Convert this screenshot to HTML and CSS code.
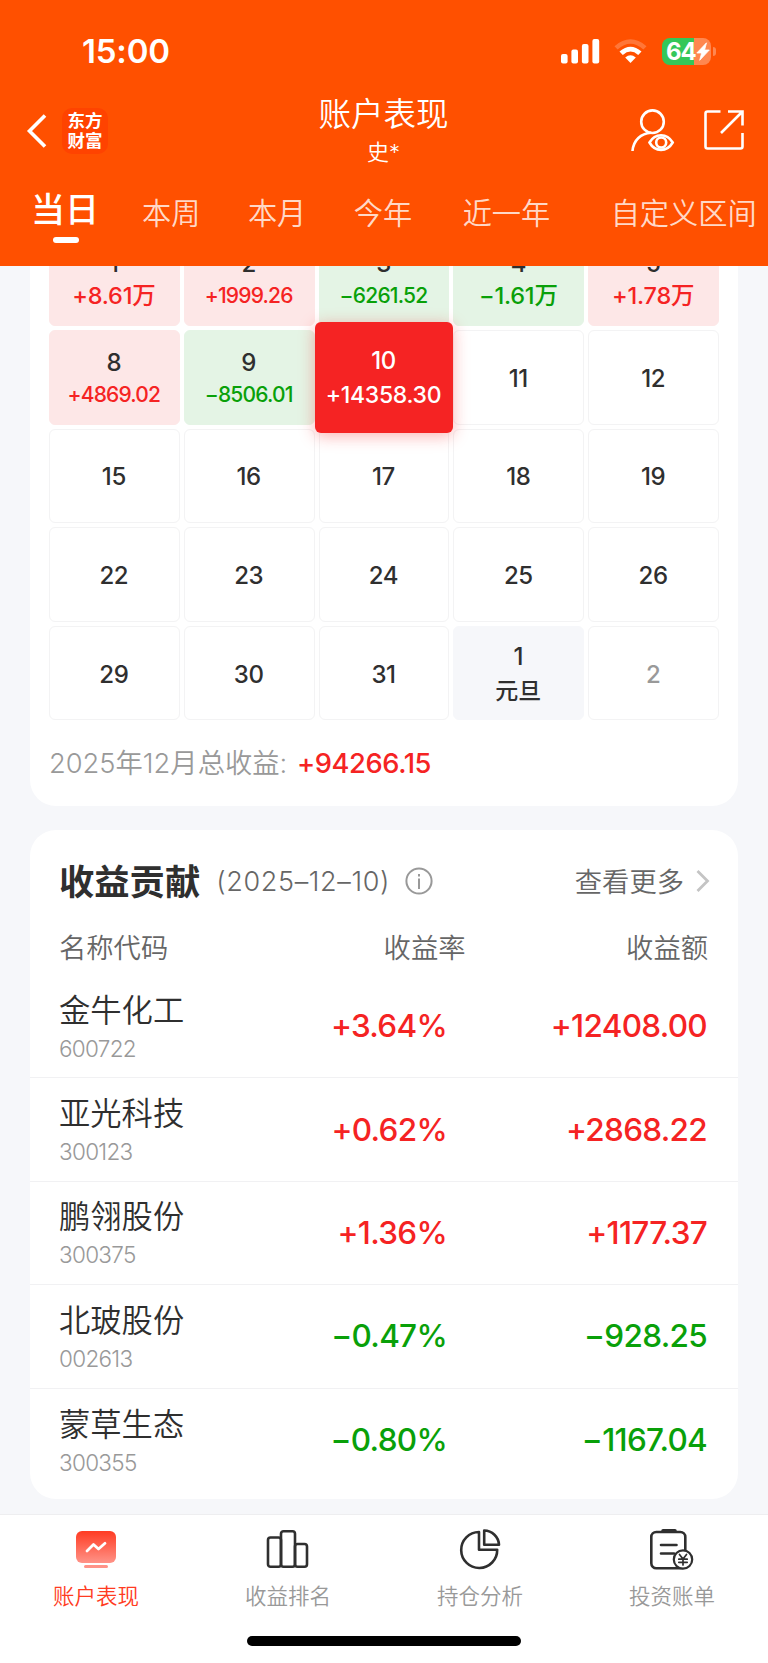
FILE: index.html
```
<!DOCTYPE html>
<html lang="zh-CN">
<head>
  <meta charset="UTF-8" />
  <meta name="viewport" content="width=device-width, initial-scale=1.0" />
  <title>账户表现</title>
  <link rel="stylesheet" href="styles.css">
</head>
<body>
  <div class="app">
    <header class="header">
      <div class="status">
        <span class="time">15:00</span>
        <div class="status-icons">
          <svg class="signal" width="39" height="25" viewBox="0 0 39 25" fill="#fff">
            <rect x="0" y="15" width="6.6" height="9.5" rx="2"/>
            <rect x="10.4" y="10.5" width="6.6" height="14" rx="2"/>
            <rect x="20.9" y="5" width="6.6" height="19.5" rx="2"/>
            <rect x="31.4" y="0" width="6.8" height="24.5" rx="2"/>
          </svg>
          <svg class="wifi" width="33" height="25" viewBox="0 0 33 25">
            <path d="M.5 7.2Q16.500 -6.500 32.500 7.200L29.400 10.400Q16.500 -.8 3.600 10.400Z" fill="#fff" opacity=".22"/>
            <path d="M5.500 12.500Q16.500 2.800 27.500 12.500L24.200 15.900Q16.500 9.300 8.800 15.900Z" fill="#fff"/>
            <path d="M11.200 18.400Q16.500 14 21.800 18.400L16.500 24Z" fill="#fff"/>
          </svg>
          <div class="battery">
            <span class="battery-text">64</span>
            <svg width="14" height="19" viewBox="0 0 14 19"><path d="M10.500 .8L.8 11H5.600L3.700 18.300 13.300 8H8.600Z" fill="#fff" stroke="#fff" stroke-width=".8" stroke-linejoin="round"/></svg>
          </div>
        </div>
      </div>

      <div class="nav">
        <div class="nav-left">
          <svg width="20" height="34" viewBox="0 0 20 34" fill="none" stroke="#fff" stroke-width="3.600"><path d="M18 1.500L2.500 17 18 32.500"/></svg>
          <div class="logo"><span>东方</span><span>财富</span></div>
        </div>
        <div class="nav-title">
          <h1>账户表现</h1>
          <p>史*</p>
        </div>
        <div class="nav-right">
          <svg width="43" height="43" viewBox="0 0 43 43" fill="none" stroke="#fff" stroke-width="2.600">
            <circle cx="21.500" cy="12.700" r="11.300"/>
            <path d="M1.500 42C2.500 31 10 24.500 20 23.800"/>
            <path d="M18.500 33.500C24 23.800 36 23.800 41.700 33.500 36 43.300 24 43.300 18.500 33.500Z"/>
            <circle cx="30.200" cy="33.500" r="5"/>
          </svg>
          <svg width="40" height="40" viewBox="0 0 40 40" fill="none" stroke="#fff" stroke-width="2.600">
            <path d="M16.500 1.500H3.500Q1.500 1.500 1.500 3.500V36.500Q1.500 38.500 3.500 38.500H36.500Q38.500 38.500 38.500 36.500V23"/>
            <path d="M24 1.500H38.500V15.500M38 2L17 23"/>
          </svg>
        </div>
      </div>

      <nav class="tabs">
        <a class="tab active">当日</a>
        <a class="tab">本周</a>
        <a class="tab">本月</a>
        <a class="tab">今年</a>
        <a class="tab">近一年</a>
        <a class="tab">自定义区间</a>
      </nav>
    </header>

    <main class="main">
      <section class="card calendar">
        <div class="grid">
          <div class="day up"><b>1</b><span class="wan">+8.61万</span></div>
          <div class="day up"><b>2</b><span>+1999.26</span></div>
          <div class="day down"><b>3</b><span>−6261.52</span></div>
          <div class="day down"><b>4</b><span class="wan">−1.61万</span></div>
          <div class="day up"><b>5</b><span class="wan">+1.78万</span></div>

          <div class="day up"><b>8</b><span>+4869.02</span></div>
          <div class="day down"><b>9</b><span>−8506.01</span></div>
          <div class="day selected"><b>10</b><span>+14358.30</span></div>
          <div class="day"><b>11</b></div>
          <div class="day"><b>12</b></div>

          <div class="day"><b>15</b></div>
          <div class="day"><b>16</b></div>
          <div class="day"><b>17</b></div>
          <div class="day"><b>18</b></div>
          <div class="day"><b>19</b></div>

          <div class="day"><b>22</b></div>
          <div class="day"><b>23</b></div>
          <div class="day"><b>24</b></div>
          <div class="day"><b>25</b></div>
          <div class="day"><b>26</b></div>

          <div class="day"><b>29</b></div>
          <div class="day"><b>30</b></div>
          <div class="day"><b>31</b></div>
          <div class="day holiday"><b>1</b><span>元旦</span></div>
          <div class="day next"><b>2</b></div>
        </div>
        <p class="total">2025年12月总收益: <strong>+94266.15</strong></p>
      </section>

      <section class="card contrib">
        <div class="contrib-head">
          <h2>收益贡献</h2>
          <span class="date">(2025–12–10)</span>
          <svg class="info" width="28" height="28" viewBox="0 0 28 28" fill="none" stroke="#999" stroke-width="2">
            <circle cx="14" cy="14" r="12.600"/>
            <path d="M14 11.500V22M14 7V9.400"/>
          </svg>
          <a class="more">查看更多
            <svg width="14" height="24" viewBox="0 0 14 24" fill="none" stroke="#c4c4c4" stroke-width="2.800"><path d="M1.500 2L11.500 12 1.500 22"/></svg>
          </a>
        </div>
        <div class="row row-head">
          <span>名称代码</span><span>收益率</span><span>收益额</span>
        </div>
        <div class="row">
          <div><p class="name">金牛化工</p><p class="code">600722</p></div>
          <span class="num red">+3.64%</span><span class="num red">+12408.00</span>
        </div>
        <div class="row">
          <div><p class="name">亚光科技</p><p class="code">300123</p></div>
          <span class="num red">+0.62%</span><span class="num red">+2868.22</span>
        </div>
        <div class="row">
          <div><p class="name">鹏翎股份</p><p class="code">300375</p></div>
          <span class="num red">+1.36%</span><span class="num red">+1177.37</span>
        </div>
        <div class="row">
          <div><p class="name">北玻股份</p><p class="code">002613</p></div>
          <span class="num green">−0.47%</span><span class="num green">−928.25</span>
        </div>
        <div class="row">
          <div><p class="name">蒙草生态</p><p class="code">300355</p></div>
          <span class="num green">−0.80%</span><span class="num green">−1167.04</span>
        </div>
      </section>
    </main>

    <footer class="footer">
      <div class="menu">
        <a class="menu-item active">
          <svg width="44" height="44" viewBox="0 0 44 44">
            <defs>
              <linearGradient id="screen" x1="0" y1="0" x2="0" y2="1">
                <stop offset="0" stop-color="#ff3b22"/>
                <stop offset="1" stop-color="#ff9388"/>
              </linearGradient>
            </defs>
            <rect x="2" y="4" width="40" height="32" rx="6" fill="url(#screen)"/>
            <rect x="10" y="38" width="24" height="3" rx="1.500" fill="#ff9388"/>
            <path d="M13 24L19.500 17.500 24.500 22 31 16.300" fill="none" stroke="#fff" stroke-width="2.800" stroke-linecap="round" stroke-linejoin="round"/>
          </svg>
          <span>账户表现</span>
        </a>
        <a class="menu-item">
          <svg width="44" height="44" viewBox="0 0 44 44" fill="none" stroke="#2f2f2f" stroke-width="2.600">
            <rect x="2" y="10.500" width="13" height="29.300" rx="2.500"/>
            <rect x="15" y="4.200" width="14" height="35.600" rx="2.500"/>
            <rect x="29" y="17" width="12" height="22.800" rx="2.500"/>
          </svg>
          <span>收益排名</span>
        </a>
        <a class="menu-item">
          <svg width="44" height="44" viewBox="0 0 44 44" fill="none" stroke="#2f2f2f" stroke-width="2.600" stroke-linejoin="round">
            <path d="M21 5V22.700H39.200A18 18 0 1 1 21 5Z"/>
            <path d="M26.200 3.500V17.800H41A15 15 0 0 0 26.200 3.500Z"/>
          </svg>
          <span>持仓分析</span>
        </a>
        <a class="menu-item">
          <svg width="44" height="44" viewBox="0 0 44 44" fill="none" stroke="#2f2f2f" stroke-width="2.600" stroke-linecap="round">
            <rect x="1.300" y="5" width="34" height="36.300" rx="5"/>
            <path d="M13 3.800H25" stroke-width="3.500"/>
            <path d="M11 18H26.500M11 26.500H24"/>
            <circle cx="33" cy="32.500" r="9.200" fill="#fff" stroke-width="2.200"/>
            <path d="M29.500 27.500L33 32 36.500 27.500M33 32V38M28.800 32.200H37.200M28.800 35.300H37.200" stroke-width="1.700"/>
          </svg>
          <span>投资账单</span>
        </a>
      </div>
      <div class="home-bar"></div>
    </footer>
  </div>
</body>
</html>
```
FILE: styles.css
```
* {
  box-sizing: border-box;
}
body {
  margin: 0;
  font-family: Inter, "Noto Sans CJK SC", sans-serif;
  color: #2f2f2f;
  background: #f6f7fa;
}
h1, h2, p {
  margin: 0;
  font-weight: 400;
}
svg {
  display: block;
  flex: none;
  overflow: visible;
}
.app {
  width: 768px;
  height: 1663px;
  display: flex;
  flex-direction: column;
  overflow: hidden;
}

/* header */
.header {
  height: 266px;
  flex: none;
  background: #ff5000;
  color: #fff;
  position: relative;
  z-index: 2;
}
.status {
  height: 98px;
  padding: 4px 52px 0 82px;
  display: flex;
  justify-content: space-between;
  align-items: center;
}
.time {
  font-size: 33px;
  font-weight: 600;
  line-height: 40px;
  letter-spacing: -0.2px;
}
.status-icons {
  display: flex;
  align-items: center;
}
.wifi {
  margin: 0 15px 0 14px;
}
.battery {
  width: 49px;
  height: 27px;
  margin-right: 5px;
  padding-left: 4px;
  border-radius: 8px;
  background: linear-gradient(to right, #34c759 0 32px, #ff8750 32px);
  display: flex;
  align-items: center;
  position: relative;
}
.battery::after {
  content: "";
  position: absolute;
  right: -5px;
  top: 9px;
  width: 3px;
  height: 9px;
  border-radius: 0 4px 4px 0;
  background: #ff8750;
}
.battery-text {
  font-size: 24px;
  font-weight: 700;
  line-height: 27px;
  letter-spacing: -1px;
}
.nav {
  height: 82px;
  padding: 0 24px 0 23px;
  display: grid;
  grid-template-columns: 1fr auto 1fr;
}
.nav-left {
  display: flex;
  align-items: center;
  gap: 15px;
  height: 65px;
  padding-left: 4px;
}
.logo {
  width: 46px;
  height: 46px;
  border-radius: 10px;
  background: #ff4300;
  display: flex;
  flex-direction: column;
  align-items: center;
  justify-content: center;
  font-size: 17.5px;
  font-weight: 700;
  line-height: 19.5px;
}
.nav-title {
  text-align: center;
}
.nav-title h1 {
  font-size: 32.5px;
  font-weight: 350;
  line-height: 34px;
}
.nav-title p {
  font-size: 22px;
  font-weight: 350;
  line-height: 40px;
}
.nav-right {
  display: flex;
  align-items: center;
  justify-content: flex-end;
  gap: 30px;
  height: 64px;
}
.tabs {
  display: flex;
  align-items: center;
  height: 66px;
  padding: 1px 0 0 31px;
  white-space: nowrap;
}
.tab {
  font-size: 29.2px;
  font-weight: 350;
  line-height: 66px;
  color: rgba(255, 255, 255, 0.8);
  margin-right: 47.5px;
}
.tab:nth-child(4) {
  margin-right: 50.5px;
}
.tab:nth-child(5) {
  margin-right: 60.5px;
}
.tab.active {
  font-size: 34px;
  font-weight: 500;
  line-height: 62px;
  color: #fff;
  margin: -8px 43px 0 0;
  position: relative;
}
.tab.active::after {
  content: "";
  position: absolute;
  left: 22px;
  bottom: -2px;
  width: 26px;
  height: 6px;
  border-radius: 3px;
  background: #fff;
}

/* scrolled content, first calendar row slides under the header */
.main {
  height: 1248px;
  flex: none;
  padding: 0 30px;
}
.card {
  background: #fff;
  border-radius: 26px;
}
.calendar {
  height: 574.5px;
  margin-top: -34.5px;
  padding: 0 19px;
}
.grid {
  display: grid;
  grid-template-columns: repeat(5, 1fr);
  grid-auto-rows: 94.5px;
  gap: 4.1px;
}
.day {
  border: 1px solid #f3f3f4;
  border-radius: 6px;
  display: flex;
  flex-direction: column;
  align-items: center;
  justify-content: center;
  line-height: 32px;
  padding: 3px 1px 0 0;
}
.day b {
  font-size: 24px;
  font-weight: 500;
  letter-spacing: -0.4px;
}
.day span {
  font-size: 21px;
  font-weight: 500;
  letter-spacing: -0.8px;
}
.day .wan {
  font-size: 23.5px;
  letter-spacing: -0.2px;
}
.up {
  background: #fde7e7;
  border-color: #fde7e7;
}
.up span,
.red {
  color: #f52323;
}
.down {
  background: #e4f4e5;
  border-color: #e4f4e5;
}
.down span,
.green {
  color: #09a009;
}
.day.selected {
  margin: -8px -4px;
  padding-top: 2px;
  border: none;
  background: #f52323;
  color: #fff;
  line-height: 35px;
  box-shadow: 0 3px 16px rgba(245, 35, 35, 0.35);
  position: relative;
  z-index: 1;
}
.day.selected span {
  font-size: 23px;
  letter-spacing: -0.3px;
}
.holiday {
  padding-top: 1px;
  background: #f6f7fa;
  border-color: #f6f7fa;
  line-height: 34px;
}
.day.holiday span {
  font-size: 23px;
  letter-spacing: 0;
}
.next b {
  color: #999;
}
.total {
  margin-top: 23px;
  font-size: 27.3px;
  font-weight: 350;
  line-height: 42px;
  color: #999;
}
.total strong {
  margin-left: 2px;
  font-weight: 500;
  letter-spacing: -0.4px;
  color: #f52323;
}

.contrib {
  margin-top: 24px;
  height: 669px;
}
.contrib-head {
  height: 99px;
  padding: 0 28px 0 29px;
  display: flex;
  align-items: center;
}
.contrib-head h2 {
  font-size: 35.3px;
  font-weight: 700;
}
.date {
  margin: 3px 0 0 16px;
  font-size: 27px;
  font-weight: 350;
  letter-spacing: 0.65px;
  color: #666;
}
.info {
  margin: 3px 0 0 15px;
}
.more {
  margin-left: auto;
  display: flex;
  align-items: center;
  gap: 12px;
  font-size: 27.3px;
  font-weight: 350;
  color: #666;
}
.more svg {
  margin-top: 2px;
}
.row {
  display: grid;
  grid-template-columns: 186px 1fr 1fr;
  align-items: center;
  height: 103.4px;
  padding: 0 31px 0 29px;
  border-bottom: 1px solid #f1f1f3;
}
.row > :first-child {
  padding-top: 4px;
}
.row > :nth-child(n + 2) {
  text-align: right;
}
.row > :nth-child(2) {
  padding-right: 29px;
}
.row:last-child {
  border-bottom: none;
}
.row.row-head {
  height: 46px;
  align-items: start;
  padding-right: 30px;
  border-bottom: none;
  font-size: 27.3px;
  font-weight: 350;
  line-height: 40px;
  color: #666;
}
.row-head > :first-child {
  padding-top: 0;
}
.row-head > :nth-child(2) {
  padding-right: 11px;
}
.name {
  font-size: 31.3px;
  font-weight: 350;
  line-height: 40px;
}
.code {
  font-size: 22.5px;
  font-weight: 350;
  line-height: 35px;
  letter-spacing: -0.7px;
  color: #999;
}
.num {
  font-size: 31.5px;
  font-weight: 500;
  line-height: 40px;
  letter-spacing: -0.7px;
}

/* bottom menu */
.footer {
  flex: 1;
  background: #fff;
  border-top: 1px solid #eeeef0;
}
.menu {
  display: grid;
  grid-template-columns: repeat(4, 1fr);
  padding-top: 12px;
}
.menu-item {
  display: flex;
  flex-direction: column;
  align-items: center;
  font-size: 21.5px;
  font-weight: 350;
  line-height: 32px;
  color: #999;
}
.menu-item span {
  margin-top: 9px;
}
.menu-item.active {
  color: #ff3b22;
}
.home-bar {
  width: 274px;
  height: 10px;
  margin: 24px auto 0;
  border-radius: 5px;
  background: #000;
}
```
